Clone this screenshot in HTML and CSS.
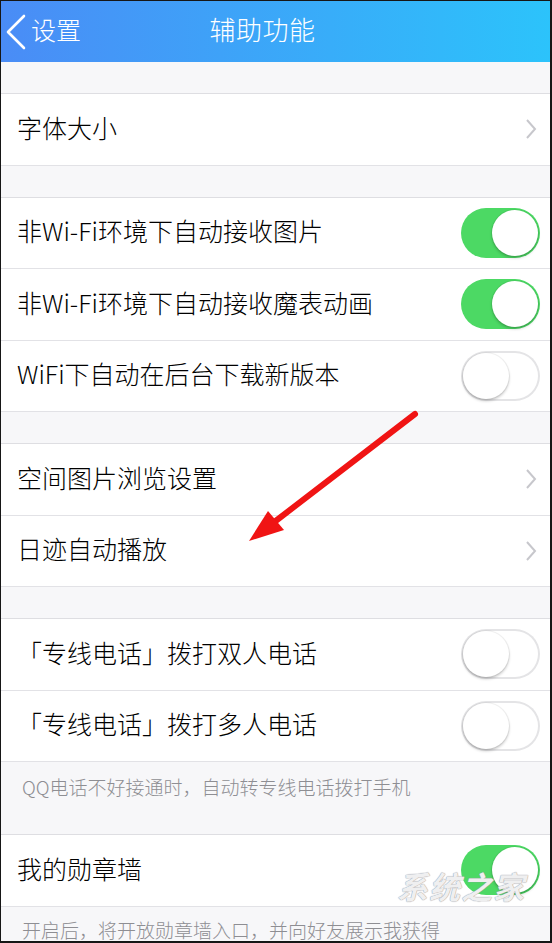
FILE: index.html
```html
<!DOCTYPE html>
<html lang="zh-CN">
<head>
  <meta charset="UTF-8">
  <title>辅助功能</title>
  <meta name="viewport" content="width=device-width, initial-scale=1.0">
  <link rel="stylesheet" href="styles.css">
</head>
<body>
  <div class="screen">
    <header class="navbar">
      <a class="back">
        <svg class="back-icon" width="22" height="36" viewBox="0 0 22 36">
          <path d="M19 2 L3 18 L19 34" fill="none" stroke="#fff" stroke-width="2.6" stroke-linecap="round" stroke-linejoin="round"/>
        </svg>
        <span>设置</span>
      </a>
      <h1>辅助功能</h1>
      <span></span>
    </header>

    <section class="group">
      <div class="row">
        <span class="label">字体大小</span>
        <svg class="chevron" width="12" height="22" viewBox="0 0 12 22">
          <path d="M2 2 L10 11 L2 20" fill="none" stroke="#c7c7cc" stroke-width="2"/>
        </svg>
      </div>
    </section>

    <section class="group">
      <div class="row">
        <span class="label">非Wi-Fi环境下自动接收图片</span>
        <span class="switch on"><span class="knob"></span></span>
      </div>
      <div class="row">
        <span class="label">非Wi-Fi环境下自动接收魔表动画</span>
        <span class="switch on"><span class="knob"></span></span>
      </div>
      <div class="row">
        <span class="label">WiFi下自动在后台下载新版本</span>
        <span class="switch"><span class="knob"></span></span>
      </div>
    </section>

    <section class="group">
      <div class="row">
        <span class="label">空间图片浏览设置</span>
        <svg class="chevron" width="12" height="22" viewBox="0 0 12 22">
          <path d="M2 2 L10 11 L2 20" fill="none" stroke="#c7c7cc" stroke-width="2"/>
        </svg>
      </div>
      <div class="row">
        <span class="label">日迹自动播放</span>
        <svg class="chevron" width="12" height="22" viewBox="0 0 12 22">
          <path d="M2 2 L10 11 L2 20" fill="none" stroke="#c7c7cc" stroke-width="2"/>
        </svg>
      </div>
    </section>

    <section class="group">
      <div class="row">
        <span class="label">「专线电话」拨打双人电话</span>
        <span class="switch"><span class="knob"></span></span>
      </div>
      <div class="row">
        <span class="label">「专线电话」拨打多人电话</span>
        <span class="switch"><span class="knob"></span></span>
      </div>
    </section>
    <p class="note">QQ电话不好接通时，自动转专线电话拨打手机</p>

    <section class="group flush">
      <div class="row">
        <span class="label">我的勋章墙</span>
        <span class="switch on"><span class="knob"></span></span>
      </div>
    </section>
    <p class="note second">开启后，将开放勋章墙入口，并向好友展示我获得</p>

    <!-- red annotation arrow drawn over the screenshot -->
    <svg class="annotation" width="550" height="940" viewBox="0 0 550 940">
      <line x1="414" y1="413" x2="272" y2="522" stroke="#f01414" stroke-width="6" stroke-linecap="round"/>
      <polygon points="248,540 267,510 283,529" fill="#f01414"/>
    </svg>

    <div class="watermark">系统之家</div>
  </div>
</body>
</html>
```

FILE: styles.css
```css
html, body {
  margin: 0;
  padding: 0;
}
body {
  background: #111;
  font-family: "Noto Sans CJK SC", "Noto Sans", sans-serif;
}
.screen {
  position: relative;
  box-sizing: border-box;
  width: 552px;
  height: 943px;
  overflow: hidden;
  background: #f7f7f9;
  border-style: solid;
  border-color: #161616;
  border-width: 1px 2px 2px 1px;
}
.navbar {
  box-sizing: border-box;
  height: 61px;
  display: grid;
  grid-template-columns: 1fr auto 1fr;
  align-items: center;
  padding: 0 30px 6px 4px;
  background: linear-gradient(to right, #4a8cf6, #2cc3fb);
  color: #fff;
}
.back {
  display: flex;
  align-items: center;
  font-size: 25px;
  font-weight: 300;
}
.back-icon {
  margin: 6px 4px 0 0;
}
.navbar h1 {
  margin: 0;
  font-size: 26px;
  font-weight: 300;
  letter-spacing: 0.5px;
}
.group {
  margin-top: 31px;
  background: #fff;
  border-top: 1px solid #dedee2;
}
.group.flush {
  margin-top: 0;
}
.row {
  box-sizing: border-box;
  height: 71.5px;
  display: flex;
  align-items: center;
  justify-content: space-between;
  padding: 0 10px 0 16px;
  border-bottom: 1px solid #e2e2e6;
}
.label {
  margin-bottom: 5px;
  font-size: 25px;
  font-weight: 300;
  color: #000;
}
.chevron {
  margin-right: 3px;
}
.switch {
  box-sizing: border-box;
  width: 79px;
  height: 50px;
  padding: 2px;
  border-radius: 25px;
  display: flex;
  background: #fff;
  box-shadow: inset 0 0 0 2px #e4e4e6;
}
.switch.on {
  justify-content: flex-end;
  background: #4cd964;
  box-shadow: none;
}
.knob {
  width: 46px;
  height: 46px;
  border-radius: 50%;
  background: #fff;
  box-shadow: 0 2px 3px rgba(0, 0, 0, 0.22), 0 0 0 1px rgba(0, 0, 0, 0.05);
}
.note {
  margin: 0;
  padding: 11px 20px 33px 21px;
  font-size: 19px;
  font-weight: 300;
  line-height: 28px;
  color: #8e8e93;
}
.note.second {
  padding-top: 9px;
}
.annotation {
  position: absolute;
  left: 0;
  top: 0;
  pointer-events: none;
}
.watermark {
  position: absolute;
  left: 396px;
  top: 862px;
  font-size: 31px;
  font-weight: bold;
  font-style: italic;
  color: rgba(255, 255, 255, 0.85);
  text-shadow: 0 0 1px #9a9aa0, 0 0 1px #9a9aa0;
  letter-spacing: 1px;
}
```
